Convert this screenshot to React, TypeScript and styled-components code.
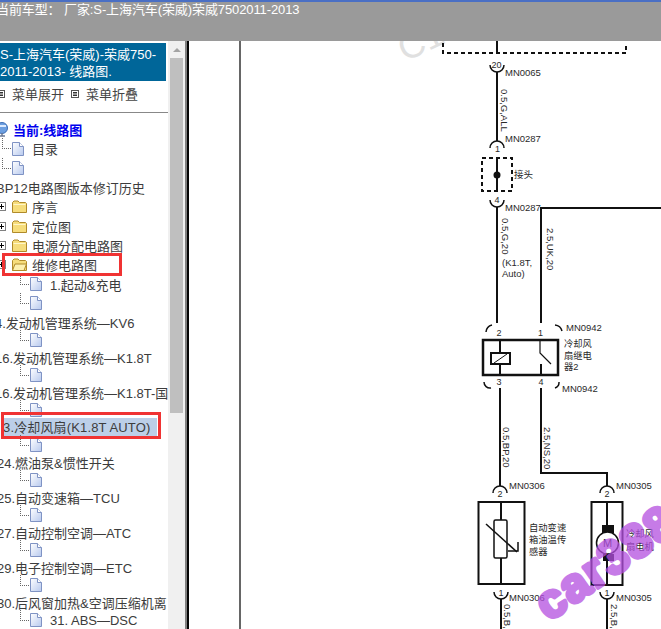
import React from 'react';
import styled, { createGlobalStyle } from 'styled-components';

const GlobalStyle = createGlobalStyle`
  html, body {
    margin: 0;
    padding: 0;
    overflow: hidden;
    background: #ffffff;
  }
`;

const Page = styled.div`
  width: 661px;
  height: 629px;
  position: relative;
  display: flex;
  flex-direction: column;
  overflow: hidden;
  font-family: 'Liberation Sans', 'Noto Sans CJK SC', sans-serif;
`;

const TopBar = styled.div`
  height: 39px;
  flex: none;
  border-top: 2px solid #4a6fc4;
  background: #9a9a9a;
  color: #ffffff;
  font-size: 13px;
  line-height: 16px;
  white-space: nowrap;
  overflow: hidden;
  text-indent: -4px;
  letter-spacing: -0.1px;
`;

const Body = styled.div`
  flex: 1;
  display: flex;
  min-height: 0;
`;

const Sidebar = styled.div`
  width: 187px;
  flex: none;
  display: flex;
  border-right: 2px solid #050505;
`;

const TreePane = styled.div`
  width: 168px;
  flex: none;
  overflow: hidden;
  padding-top: 2px;
`;

const TitleBlock = styled.div`
  width: 166px;
  height: 38px;
  background: #006699;
  color: #ffffff;
  font-size: 13px;
  line-height: 17px;
  padding-top: 3px;
  box-sizing: border-box;
  white-space: nowrap;
  overflow: hidden;
`;

const MenuRow = styled.div`
  height: 32px;
  display: flex;
  align-items: center;
  gap: 7px;
  border-bottom: 1px solid #888888;
  box-sizing: border-box;
  padding-bottom: 6px;
  font-size: 13px;
  color: #444444;
  margin-left: -3px;
  margin-right: -3px;
`;

const MenuToggle = styled.span`
  display: inline-flex;
  align-items: center;
  gap: 7px;
`;

const TreeList = styled.div`
  display: flex;
  flex-direction: column;
  margin-top: 7px;
`;

const LowerList = styled.div`
  display: flex;
  flex-direction: column;
  margin-top: 1px;
`;

const Row = styled.div<{ $indent?: number }>`
  height: 19.3px;
  flex: none;
  display: flex;
  align-items: center;
  padding-left: ${(p) => p.$indent ?? 0}px;
  white-space: nowrap;
  font-size: 13px;
  color: #3c3c3c;
`;

const TightRow = styled(Row)`
  height: 17.5px;
`;

// dotted elbow joining a leaf to the trunk above it
const Connector = styled.span`
  position: relative;
  width: 9px;
  margin-right: 1px;
  flex: none;
  border-top: 1px dotted #666666;
  &::before {
    content: '';
    position: absolute;
    left: 0;
    bottom: 0;
    height: 11px;
    border-left: 1px dotted #666666;
  }
`;

const CurrentLabel = styled.span`
  margin-left: 5px;
  color: #0000ee;
  font-weight: 700;
`;

const LeafLabel = styled.span`
  margin-left: 8px;
`;

const Cropped = styled.span<{ $shift: number }>`
  display: inline-flex;
  margin-left: ${(p) => p.$shift}px;
`;

const SelectedLabel = styled.span`
  margin-left: 3px;
  padding-right: 7px;
  line-height: 19px;
  letter-spacing: 0.15px;
  background: #bccfe8;
`;

const FolderSlot = styled.span`
  display: inline-flex;
  margin: 0 5px 0 6px;
`;

const RedBox = styled.div<{ $top: number; $left: number; $width: number; $height: number }>`
  position: absolute;
  top: ${(p) => p.$top}px;
  left: ${(p) => p.$left}px;
  width: ${(p) => p.$width}px;
  height: ${(p) => p.$height}px;
  border: 3px solid #f03333;
  box-sizing: border-box;
`;

const Scrollbar = styled.div`
  width: 17px;
  flex: none;
  border-right: 2px solid #808080;
  background: #f0f0f0;
  display: flex;
  flex-direction: column;
  align-items: center;
`;

const ScrollArrow = styled.div`
  height: 17px;
  flex: none;
  display: flex;
  align-items: center;
  justify-content: center;
  &::before {
    content: '';
    border-left: 4px solid transparent;
    border-right: 4px solid transparent;
    border-bottom: 4px solid #a3a3a3;
  }
`;

const ScrollThumb = styled.div`
  width: 13px;
  height: 355px;
  background: #bfbfbf;
`;

const Diagram = styled.div`
  flex: 1;
  min-width: 0;
  background: #ffffff;
`;

const Canvas = styled.svg`
  display: block;
`;

const DocIcon = () => (
  <svg width="12" height="14" viewBox="0 0 12 14">
    <defs>
      <linearGradient id="doc" x1="0" y1="0" x2="1" y2="1">
        <stop offset="0" stopColor="#ffffff" />
        <stop offset="1" stopColor="#b7c9ee" />
      </linearGradient>
    </defs>
    <path d="M.5.5h7l4 4v9H.5z" fill="url(#doc)" stroke="#7f93c4" />
    <path d="M7.500.5v4h4" fill="#fff" stroke="#7f93c4" />
  </svg>
);

const FolderIcon = ({ open }: { open?: boolean }) => (
  <svg width="15" height="13" viewBox="0 0 15 13">
    <path d="M.5 2.500 2 1h4l1.500 1.500h6l1 1v9H.5z" fill="#f6dd7c" stroke="#b08a2a" />
    {open ? (
      <path d="M.5 12.500 3 6h11.500L12 12.500z" fill="#fdf1b0" stroke="#b08a2a" />
    ) : (
      <path d="M1.500 4.500h12" stroke="#fff6c8" />
    )}
  </svg>
);

const Expander = () => (
  <svg width="9" height="9" viewBox="0 0 9 9">
    <rect x=".5" y=".5" width="8" height="8" fill="#fff" stroke="#808080" />
    <path d="M2 4.500h5M4.500 2v5" stroke="#000" />
  </svg>
);

const ListIcon = () => (
  <svg width="8" height="8" viewBox="0 0 8 8">
    <rect x=".5" y=".5" width="7" height="7" fill="#fff" stroke="#555" />
    <path d="M2 2.500h4M2 4h4M2 5.500h4" stroke="#333" />
  </svg>
);

const ComputerIcon = () => (
  <svg width="12" height="15" viewBox="0 0 12 15">
    <circle cx="6" cy="6" r="5.500" fill="#6d9fe0" stroke="#3b6db5" />
    <path d="M2 4h8" stroke="#dcebff" strokeWidth="2" />
    <path d="M6 11v3M3 14h6" stroke="#6d7a94" strokeWidth="1.500" />
  </svg>
);

const BlankDoc = () => (
  <TightRow $indent={20}>
    <Connector />
    <DocIcon />
  </TightRow>
);

const FolderRow = ({ label, open }: { label: string; open?: boolean }) => (
  <Row>
    <Cropped $shift={-3}>
      <Expander />
    </Cropped>
    <FolderSlot>
      <FolderIcon open={open} />
    </FolderSlot>
    {label}
  </Row>
);

const upperRows: { label: string; shift: number }[] = [
  { label: '4.发动机管理系统—KV6', shift: -5 },
  { label: '16.发动机管理系统—K1.8T', shift: -5 },
  { label: '16.发动机管理系统—K1.8T-国', shift: -5 },
];

const lowerRows: { label: string; shift: number }[] = [
  { label: '24.燃油泵&惯性开关', shift: -3 },
  { label: '25.自动变速箱—TCU', shift: -3 },
  { label: '27.自动控制空调—ATC', shift: -3 },
  { label: '29.电子控制空调—ETC', shift: -3 },
];

const SchematicText = styled.text<{ $size?: number }>`
  font-family: 'Liberation Sans', 'Noto Sans CJK SC', sans-serif;
  font-size: ${(p) => p.$size ?? 9.5}px;
  fill: #2a2a2a;
`;

const Watermark = styled.text`
  font-family: 'Liberation Sans', sans-serif;
  font-weight: 700;
  font-size: 48px;
  letter-spacing: 1.5px;
  fill: #b44fe0;
  stroke: #b44fe0;
  stroke-width: 4px;
  stroke-linejoin: round;
  opacity: 0.75;
`;

const Ghost = styled.text`
  font-family: 'Liberation Sans', sans-serif;
  font-size: 36px;
  fill: #e0e0e0;
`;

const RotatedLabel = ({ x, y, children }: { x: number; y: number; children: string }) => (
  <SchematicText transform={`translate(${x} ${y}) rotate(90)`}>{children}</SchematicText>
);

// viewBox is in page pixels so the wiring reads straight off the reference
const Schematic = () => (
  <Canvas width="472" height="588" viewBox="189 41 472 588">
    <line x1="240" y1="41" x2="240" y2="629" stroke="#666666" strokeWidth="2" />
    <Ghost x="405" y="62" transform="rotate(-25 405 62)">C1</Ghost>
    <g fill="none" stroke="#111111" strokeWidth="2">
      <path d="M443 43v10h183v-10" strokeDasharray="4 3" />
      <path d="M497 41v12" />
      <path d="M497 72v69M497 158v33M497 207v116" />
      <path d="M541 323V208h120" />
      <path d="M500 339v14M500 364v11M541 364v11" />
      <path d="M500 388v98M541 388v85h66v13" />
      <path d="M501 502v18M501 558v26M501 599v30" />
      <path d="M607 502v83M607 599v30" />
      <rect x="482" y="158" width="30" height="33" strokeDasharray="4 3" />
      <rect x="483" y="340" width="75" height="35" strokeWidth="2.500" />
      <rect x="491" y="353" width="19" height="11" />
      <path d="M494 363l13-9" strokeWidth="1" />
      <path d="M540 341v12l11 11" strokeWidth="1.200" />
      <rect x="478.500" y="502" width="46" height="82" />
      <rect x="591.500" y="502" width="31" height="83" />
      <rect x="494" y="520" width="13" height="38" rx="1.500" strokeWidth="1.500" fill="#ffffff" />
      <path d="M486 524l31 28" strokeWidth="1.500" />
      <path d="M508 551h10v-9" strokeWidth="1.500" />
    </g>
    <g fill="none" stroke="#111111" strokeWidth="1.500">
      <path d="M490 65a7 7 0 0 0 14 0" />
      <path d="M490 148a7 7 0 0 1 14 0" />
      <path d="M490 200a7 7 0 0 0 14 0" />
      <path d="M486 332a8 8 0 0 1 6-7M555 325a8 8 0 0 1 7 6" />
      <path d="M484 382a6 6 0 0 0 7 6M555 388a6 6 0 0 0 4-6" />
      <path d="M493 493a7 7 0 0 1 14 0" />
      <path d="M600 493a7 7 0 0 1 14 0" />
      <path d="M494 592a7 7 0 0 0 14 0" />
      <path d="M600 592a7 7 0 0 0 14 0" />
    </g>
    <circle cx="497" cy="175" r="3.500" fill="#111111" />
    <rect x="602" y="525" width="12" height="8" fill="#111111" />
    <rect x="603" y="554" width="11" height="7" fill="#111111" />
    <circle cx="607.500" cy="543" r="11" fill="#ffffff" stroke="#111111" strokeWidth="1.500" />
    <SchematicText x="603" y="547" $size={11}>M</SchematicText>
    <SchematicText x="491.500" y="68" $size={9}>20</SchematicText>
    <SchematicText x="505" y="76">MN0065</SchematicText>
    <SchematicText x="505" y="142">MN0287</SchematicText>
    <SchematicText x="495" y="152" $size={9}>1</SchematicText>
    <SchematicText x="494.500" y="203" $size={9}>4</SchematicText>
    <SchematicText x="505" y="211">MN0287</SchematicText>
    <SchematicText x="514" y="178" $size={9.500}>接头</SchematicText>
    <RotatedLabel x={501} y={89}>0.5,G,ALL</RotatedLabel>
    <RotatedLabel x={502} y={218}>0.5,G,20</RotatedLabel>
    <RotatedLabel x={547} y={228}>2.5,UK,20</RotatedLabel>
    <RotatedLabel x={503} y={427}>0.5,BP,20</RotatedLabel>
    <RotatedLabel x={544} y={427}>2.5,NS,20</RotatedLabel>
    <RotatedLabel x={504} y={604}>0.5,B,</RotatedLabel>
    <RotatedLabel x={611} y={604}>2.5,B,</RotatedLabel>
    <SchematicText x="502" y="265.500">(K1.8T,</SchematicText>
    <SchematicText x="502" y="277">Auto)</SchematicText>
    <SchematicText x="566" y="331">MN0942</SchematicText>
    <SchematicText x="562" y="392">MN0942</SchematicText>
    <SchematicText x="496.500" y="336" $size={9}>2</SchematicText>
    <SchematicText x="538" y="336" $size={9}>1</SchematicText>
    <SchematicText x="496.500" y="385" $size={9}>3</SchematicText>
    <SchematicText x="538.500" y="385" $size={9}>4</SchematicText>
    <SchematicText x="564" y="347" $size={9.300}>冷却风</SchematicText>
    <SchematicText x="564" y="358.500" $size={9.300}>扇继电</SchematicText>
    <SchematicText x="564" y="370" $size={9.300}>器2</SchematicText>
    <SchematicText x="509" y="489">MN0306</SchematicText>
    <SchematicText x="616" y="489">MN0305</SchematicText>
    <SchematicText x="497.500" y="497" $size={9}>2</SchematicText>
    <SchematicText x="604.500" y="497" $size={9}>2</SchematicText>
    <SchematicText x="529" y="531" $size={9.300}>自动变速</SchematicText>
    <SchematicText x="529" y="543" $size={9.300}>箱油温传</SchematicText>
    <SchematicText x="529" y="555" $size={9.300}>感器</SchematicText>
    <SchematicText x="626" y="537" $size={9.300}>冷却风</SchematicText>
    <SchematicText x="626" y="550" $size={9.300}>扇电机</SchematicText>
    <SchematicText x="498.500" y="596" $size={9}>1</SchematicText>
    <SchematicText x="604.500" y="596" $size={9}>1</SchematicText>
    <SchematicText x="509" y="601">MN0306</SchematicText>
    <SchematicText x="616" y="601">MN0305</SchematicText>
    <Watermark transform="translate(549 622) rotate(-35)">car388</Watermark>
  </Canvas>
);

export default function App() {
  return (
    <Page>
      <GlobalStyle />
      <TopBar>当前车型：&nbsp;厂家:S-上海汽车(荣威)荣威7502011-2013</TopBar>
      <Body>
        <Sidebar>
          <TreePane>
            <TitleBlock>
              S-上海汽车(荣威)-荣威750-
              <br />
              2011-2013- 线路图.
            </TitleBlock>
            <MenuRow>
              <MenuToggle>
                <ListIcon />
                菜单展开
              </MenuToggle>
              <MenuToggle>
                <ListIcon />
                菜单折叠
              </MenuToggle>
            </MenuRow>
            <TreeList>
              <Row>
                <Cropped $shift={-4}>
                  <ComputerIcon />
                </Cropped>
                <CurrentLabel>当前:线路图</CurrentLabel>
              </Row>
              <Row $indent={2}>
                <Connector />
                <DocIcon />
                <LeafLabel>目录</LeafLabel>
              </Row>
              <Row $indent={2}>
                <Connector />
                <DocIcon />
              </Row>
              <Row>
                <Cropped $shift={-4}>BP12电路图版本修订历史</Cropped>
              </Row>
              <FolderRow label="序言" />
              <FolderRow label="定位图" />
              <FolderRow label="电源分配电路图" />
              <FolderRow label="维修电路图" open />
              <Row $indent={20}>
                <Connector />
                <DocIcon />
                <LeafLabel>1.起动&amp;充电</LeafLabel>
              </Row>
              <Row $indent={20}>
                <Connector />
                <DocIcon />
              </Row>
              <LowerList>
                {upperRows.map((r) => (
                  <React.Fragment key={r.label}>
                    <TightRow>
                      <Cropped $shift={r.shift}>{r.label}</Cropped>
                    </TightRow>
                    <BlankDoc />
                  </React.Fragment>
                ))}
                <TightRow>
                  <SelectedLabel>3.冷却风扇(K1.8T AUTO)</SelectedLabel>
                </TightRow>
                <BlankDoc />
                {lowerRows.map((r) => (
                  <React.Fragment key={r.label}>
                    <TightRow>
                      <Cropped $shift={r.shift}>{r.label}</Cropped>
                    </TightRow>
                    <BlankDoc />
                  </React.Fragment>
                ))}
                <TightRow>
                  <Cropped $shift={-3}>30.后风窗加热&amp;空调压缩机离</Cropped>
                </TightRow>
                <TightRow $indent={20}>
                  <Connector />
                  <DocIcon />
                  <LeafLabel>31. ABS—DSC</LeafLabel>
                </TightRow>
              </LowerList>
            </TreeList>
          </TreePane>
          <Scrollbar>
            <ScrollArrow />
            <ScrollThumb />
          </Scrollbar>
        </Sidebar>
        <Diagram>
          <Schematic />
        </Diagram>
      </Body>
      <RedBox $top={253} $left={2} $width={120} $height={23} />
      <RedBox $top={412} $left={1} $width={160} $height={27} />
    </Page>
  );
}
